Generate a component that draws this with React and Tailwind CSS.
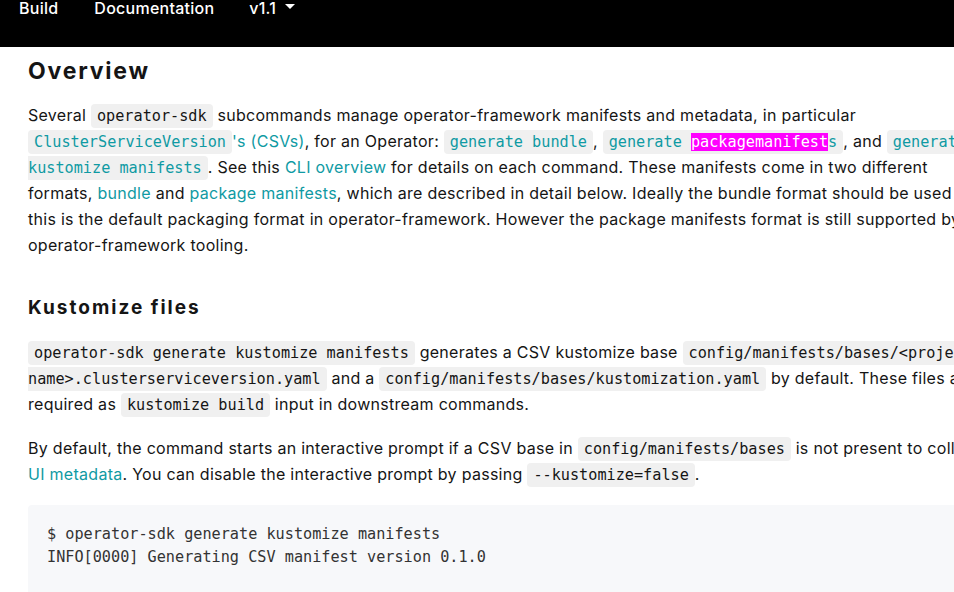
import React from "react";

const C = ({ children, link, noLeft, noRight }) => (
  <code
    className={`rounded-[4px] bg-[#f0f0f0] py-[3px] text-[15.2px] leading-[16px] tracking-normal ${link ? "text-[#0f9aa3]" : "text-[#151515]"} ${noLeft ? "rounded-l-none pl-0" : "pl-[6px]"} ${noRight ? "rounded-r-none pr-0" : "pr-[6px]"}`}
  >
    {children}
  </code>
);

const A = ({ children }) => <span className="text-[#0f9aa3]">{children}</span>;

export default function App() {
  return (
    <div
      className="min-h-[592px] w-[954px] overflow-hidden bg-white text-[#151515]"
      style={{ fontFamily: 'Inter, sans-serif' }}
    >
      <style>{`code{font-family:"DejaVu Sans Mono",monospace;}`}</style>
      <nav className="flex h-[47px] items-start bg-black pl-[19px] text-[16px] font-medium leading-[16px] tracking-[0.25px] text-white">
        <span>Build</span>
        <span className="ml-[36px]">Documentation</span>
        <span className="ml-[35px] flex items-center">
          v1.1
          <svg className="ml-[9px] mt-[-2px]" width="10" height="6" viewBox="0 0 10 6">
            <path d="M0 0 L10 0 L5 5 Z" fill="white" />
          </svg>
        </span>
      </nav>

      <div className="pl-[28px]">
        <h1 className="mt-[11px] text-[23px] font-bold leading-[26px] tracking-[1.8px]">Overview</h1>

        <p className="mt-[18px] whitespace-nowrap text-[16px] leading-[26px] tracking-[0.28px]">
          Several <C>operator-sdk</C> subcommands manage operator-framework manifests and metadata, in particular
          <br />
          <A>
            <C link>ClusterServiceVersion</C>'s (CSVs)
          </A>
          , for an Operator: <C link>generate bundle</C>,{" "}
          <C link>
            generate <span className="bg-[#ff00ff] text-white">packagemanifest</span>s
          </C>
          , and <C link noRight>generate</C>
          <br />
          <C link noLeft>kustomize manifests</C>. See this <A>CLI overview</A> for details on each command. These manifests come in two different
          <br />
          formats, <A>bundle</A> and <A>package manifests</A>, which are described in detail below. Ideally the bundle format should be used as
          <br />
          this is the default packaging format in operator-framework. However the package manifests format is still supported by
          <br />
          operator-framework tooling.
        </p>

        <h2 className="mt-[37px] text-[19px] font-bold leading-[26px] tracking-[2px]">Kustomize files</h2>

        <p className="mt-[18px] whitespace-nowrap text-[16px] leading-[26px] tracking-[0.28px]">
          <C>operator-sdk generate kustomize manifests</C> generates a CSV kustomize base <C noRight>config/manifests/bases/&lt;project-</C>
          <br />
          <C noLeft>name&gt;.clusterserviceversion.yaml</C> and a <C>config/manifests/bases/kustomization.yaml</C> by default. These files are
          <br />
          required as <C>kustomize build</C> input in downstream commands.
        </p>

        <p className="mt-[18px] whitespace-nowrap text-[16px] leading-[26px] tracking-[0.28px]">
          By default, the command starts an interactive prompt if a CSV base in <C>config/manifests/bases</C> is not present to collect
          <br />
          <A>UI metadata</A>. You can disable the interactive prompt by passing <C>--kustomize=false</C>.
        </p>

        <pre className="mt-[18px] h-[120px] rounded-l-[4px] bg-[#f7f8fa] pl-[19px] pt-[18px] text-[15.2px] leading-[23px] text-[#333]">
          <code className="block leading-[23px]">
            $ operator-sdk generate kustomize manifests{"\n"}INFO[0000] Generating CSV manifest version 0.1.0
          </code>
        </pre>
      </div>
    </div>
  );
}
